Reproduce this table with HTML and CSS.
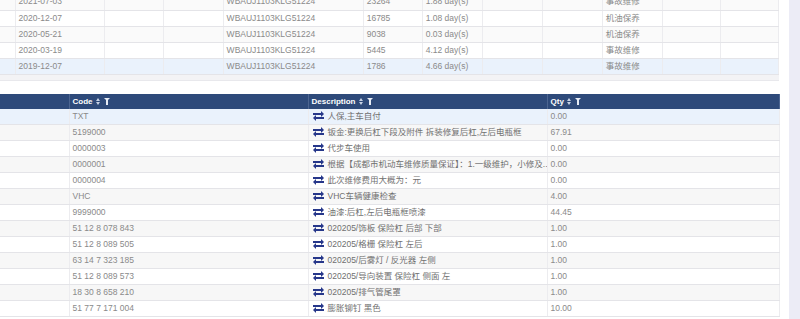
FILE: index.html
```html
<!DOCTYPE html>
<html>
<head>
<meta charset="utf-8">
<link rel="stylesheet" href="styles.css">
</head>
<body>
<div class="page">
  <div class="main">
    <div class="panel top-panel">
      <table class="grid top-grid">
        <colgroup>
          <col style="width:15px"><col style="width:89px"><col style="width:59px"><col style="width:60px"><col style="width:140px"><col style="width:59px"><col style="width:60px"><col style="width:60px"><col style="width:60px"><col style="width:60px"><col style="width:58px"><col style="width:58px">
        </colgroup>
        <tbody>
          <tr class="alt"><td></td><td>2021-07-03</td><td></td><td></td><td>WBAUJ1103KLG51224</td><td>23264</td><td>1.88 day(s)</td><td></td><td></td><td>事故维修</td><td></td><td></td></tr>
          <tr><td></td><td>2020-12-07</td><td></td><td></td><td>WBAUJ1103KLG51224</td><td>16785</td><td>1.08 day(s)</td><td></td><td></td><td>机油保养</td><td></td><td></td></tr>
          <tr class="alt"><td></td><td>2020-05-21</td><td></td><td></td><td>WBAUJ1103KLG51224</td><td>9038</td><td>0.03 day(s)</td><td></td><td></td><td>机油保养</td><td></td><td></td></tr>
          <tr><td></td><td>2020-03-19</td><td></td><td></td><td>WBAUJ1103KLG51224</td><td>5445</td><td>4.12 day(s)</td><td></td><td></td><td>事故维修</td><td></td><td></td></tr>
          <tr class="sel"><td></td><td>2019-12-07</td><td></td><td></td><td>WBAUJ1103KLG51224</td><td>1786</td><td>4.66 day(s)</td><td></td><td></td><td>事故维修</td><td></td><td></td></tr>
        </tbody>
      </table>
      <div class="panel-foot"></div>
    </div>

    <div class="panel bottom-panel">
      <table class="grid bottom-grid">
        <colgroup>
          <col style="width:69px"><col style="width:239px"><col style="width:239px"><col style="width:232px">
        </colgroup>
        <thead>
          <tr>
            <th></th>
            <th><span class="hd">Code <span class="sort"></span><span class="filter"></span></span></th>
            <th><span class="hd">Description <span class="sort"></span><span class="filter"></span></span></th>
            <th><span class="hd">Qty <span class="sort"></span><span class="filter"></span></span></th>
          </tr>
        </thead>
        <tbody>
          <tr class="sel"><td></td><td>TXT</td><td class="desc"><span class="swap"></span>人保,主车自付</td><td>0.00</td></tr>
          <tr class="alt"><td></td><td>5199000</td><td class="desc"><span class="swap"></span>钣金:更换后杠下段及附件 拆装修复后杠,左后电瓶框</td><td>67.91</td></tr>
          <tr><td></td><td>0000003</td><td class="desc"><span class="swap"></span>代步车使用</td><td>0.00</td></tr>
          <tr class="alt"><td></td><td>0000001</td><td class="desc"><span class="swap"></span>根据【成都市机动车维修质量保证】：1.一级维护，小修及...</td><td>0.00</td></tr>
          <tr><td></td><td>0000004</td><td class="desc"><span class="swap"></span>此次维修费用大概为：元</td><td>0.00</td></tr>
          <tr class="alt"><td></td><td>VHC</td><td class="desc"><span class="swap"></span>VHC车辆健康检查</td><td>4.00</td></tr>
          <tr><td></td><td>9999000</td><td class="desc"><span class="swap"></span>油漆:后杠,左后电瓶框喷漆</td><td>44.45</td></tr>
          <tr class="alt"><td></td><td>51 12 8 078 843</td><td class="desc"><span class="swap"></span>020205/饰板 保险杠 后部 下部</td><td>1.00</td></tr>
          <tr><td></td><td>51 12 8 089 505</td><td class="desc"><span class="swap"></span>020205/格栅 保险杠 左后</td><td>1.00</td></tr>
          <tr class="alt"><td></td><td>63 14 7 323 185</td><td class="desc"><span class="swap"></span>020205/后雾灯 / 反光器 左侧</td><td>1.00</td></tr>
          <tr><td></td><td>51 12 8 089 573</td><td class="desc"><span class="swap"></span>020205/导向装置 保险杠 侧面 左</td><td>1.00</td></tr>
          <tr class="alt"><td></td><td>18 30 8 658 210</td><td class="desc"><span class="swap"></span>020205/排气管尾罩</td><td>1.00</td></tr>
          <tr><td></td><td>51 77 7 171 004</td><td class="desc"><span class="swap"></span>膨胀铆钉 黑色</td><td>10.00</td></tr>
        </tbody>
      </table>
    </div>
  </div>
  <div class="side"></div>
</div>
</body>
</html>
```

FILE: styles.css
```css
* { box-sizing: border-box; }
html, body { margin: 0; padding: 0; }
body {
  width: 800px;
  height: 319px;
  overflow: hidden;
  background: #ffffff;
  font-family: "Liberation Sans", "Noto Sans CJK SC", sans-serif;
  font-size: 8.5px;
  color: #8a8a8a;
}
.page {
  display: flex;
  height: 319px;
}
.main {
  width: 789px;
  display: flex;
  flex-direction: column;
}
.side {
  width: 11px;
  background: #ececf6;
}
.panel {
  width: 779px;
}
.top-panel {
  margin-top: -6px;
}
.grid {
  border-collapse: collapse;
  table-layout: fixed;
  width: 779px;
}
.grid td {
  height: 16px;
  padding: 0 3px;
  border-bottom: 1px solid #e4e4e8;
  border-right: 1px solid #ececef;
  white-space: nowrap;
  overflow: hidden;
  line-height: 15px;
}
.top-grid tr.alt td { background: #fafafa; }
.grid tr.sel td { background: #eaf2fc; }
.panel-foot {
  height: 6px;
  background: #f3f3f5;
  border-bottom: 1px solid #e8e8ec;
}
.bottom-panel {
  margin-top: 13px;
}
.bottom-grid thead th {
  height: 15px;
  background: #2e4a7a;
  color: #ffffff;
  font-weight: bold;
  font-size: 8px;
  text-align: left;
  padding: 0 3px;
  border-right: 1px solid #4c6591;
  white-space: nowrap;
}
.bottom-grid tr.alt td { background: #f7f7f7; }
.bottom-grid tr.sel td { background: #eaf2fc; }
.hd { display: inline-flex; align-items: center; gap: 3px; }
.sort {
  display: inline-block;
  width: 5px;
  height: 7px;
  position: relative;
}
.sort::before, .sort::after {
  content: "";
  position: absolute;
  left: 0;
  border-left: 2.5px solid transparent;
  border-right: 2.5px solid transparent;
}
.sort::before { top: 0; border-bottom: 3px solid #c8d2e4; }
.sort::after { bottom: 0; border-top: 3px solid #c8d2e4; }
.filter {
  display: inline-block;
  width: 6px;
  height: 7px;
  position: relative;
}
.filter::before {
  content: "";
  position: absolute;
  left: 0; top: 0;
  border-left: 3px solid transparent;
  border-right: 3px solid transparent;
  border-top: 3px solid #e6ebf4;
}
.filter::after {
  content: "";
  position: absolute;
  left: 2px; top: 2px;
  width: 2px; height: 5px;
  background: #e6ebf4;
}
.desc { color: #707070; }
.swap {
  display: inline-block;
  vertical-align: middle;
  width: 11px;
  height: 8px;
  margin: -2px 4px 0 1px;
  position: relative;
}
.swap::before, .swap::after {
  content: "";
  position: absolute;
  width: 0; height: 0;
  border-top: 3px solid transparent;
  border-bottom: 3px solid transparent;
}
.swap::before {
  top: -1px; right: 0;
  border-left: 3px solid #26378a;
  box-shadow: none;
}
.swap::after {
  bottom: -1px; left: 0;
  border-right: 3px solid #26378a;
}
.swap {
  background:
    linear-gradient(#26378a, #26378a) 0 1px / 9px 2px no-repeat,
    linear-gradient(#26378a, #26378a) 2px 5px / 9px 2px no-repeat;
}
```
